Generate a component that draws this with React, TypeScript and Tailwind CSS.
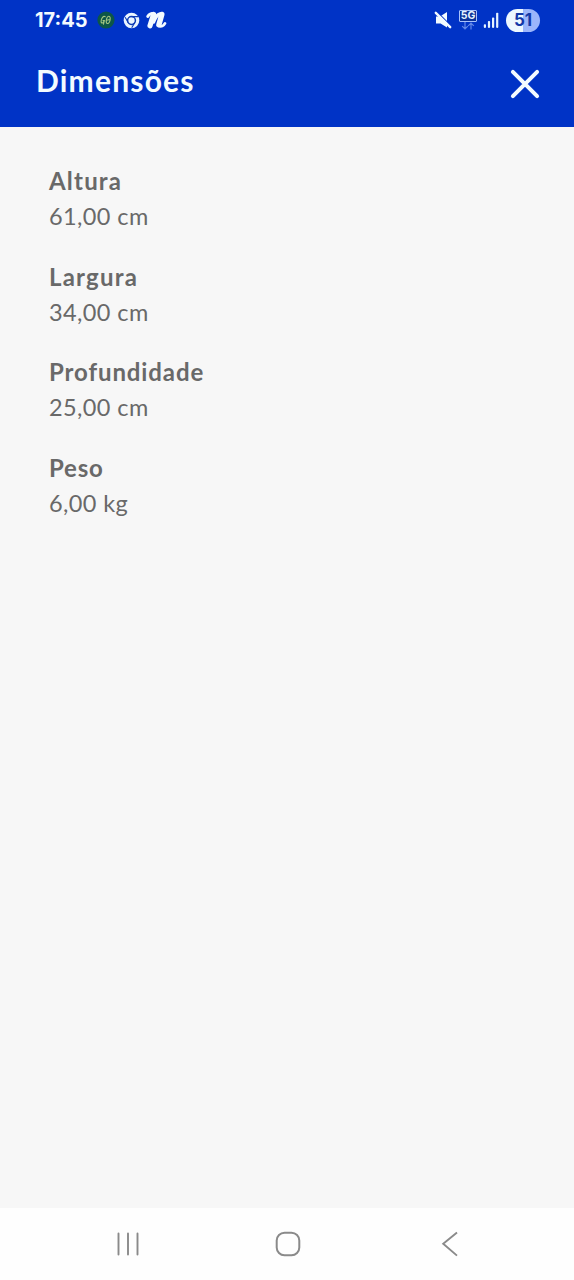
type Dimension = {
  label: string;
  value: string;
  labelClass: string;
};

const dimensions: Dimension[] = [
  { label: "Altura", value: "61,00 cm", labelClass: "tracking-[1.2px]" },
  { label: "Largura", value: "34,00 cm", labelClass: "tracking-[1.2px]" },
  { label: "Profundidade", value: "25,00 cm", labelClass: "tracking-[0.9px]" },
  { label: "Peso", value: "6,00 kg", labelClass: "tracking-[0.8px]" },
];

export default function App() {
  return (
    <div className="flex h-[1280px] w-[574px] flex-col overflow-hidden bg-[#f7f7f7] font-['Lato',sans-serif]">
      <header className="h-[127px] shrink-0 bg-[#0033c6] text-[#f3fbff]">
        <StatusBar />
        <div className="flex h-[87px] items-start justify-between pl-[36px] pr-[33px]">
          <h1 className="mt-[19px] text-[30px] font-bold leading-[42px] tracking-[1.2px]">Dimensões</h1>
          <button aria-label="Fechar" className="mt-[28px]">
            <svg width="32" height="32" viewBox="0 0 32 32" fill="none" stroke="currentColor" strokeWidth="4" strokeLinecap="round">
              <path d="M3.9 3.9 28.1 28.1M28.1 3.9 3.9 28.1" />
            </svg>
          </button>
        </div>
      </header>

      <main className="flex-1 pl-[49px] pt-[36px] text-[#696969]">
        <dl className="flex flex-col gap-[24.6px]">
          {dimensions.map((d) => (
            <div key={d.label}>
              <dt className={`text-[24px] font-bold leading-[36px] ${d.labelClass}`}>{d.label}</dt>
              <dd className="text-[23.5px] leading-[35px] tracking-[0.4px]">{d.value}</dd>
            </div>
          ))}
        </dl>
      </main>

      <NavBar />
    </div>
  );
}

function StatusBar() {
  return (
    <div className="flex h-10 items-center justify-between pl-[35px] pr-[34px]">
      <div className="flex items-center">
        <span className="w-[53px] whitespace-nowrap font-['Inter',sans-serif] text-[20px] font-bold leading-6">17:45</span>
        <GoIcon />
        <ChromeIcon />
        <ScriptIcon />
      </div>
      <div className="flex items-center">
        <MutedIcon />
        <NetworkIcon />
        <SignalIcon />
        <div className="ml-[7px] flex h-[23px] w-[34px] items-center justify-center rounded-full bg-linear-to-r from-[#edf8ff] from-51% to-[#9bb5fb] to-51% font-['Inter',sans-serif] text-[17px] font-bold leading-none text-[#1338a8]">
          51
        </div>
      </div>
    </div>
  );
}

function GoIcon() {
  return (
    <svg className="ml-[9px]" width="18" height="18" viewBox="0 0 18 18" fill="none">
      <circle cx="9" cy="9" r="8.6" fill="#0c5647" />
      <path
        d="M8.2 5.6C6.2 4.4 4 7.8 4.1 10.5c0 2.3 2.6 2 3.2-.9H6M7.3 9.6l-.8 3.6M11.8 5.2c-2 .1-3 4.4-2.4 6.4.6 1.8 2.8.9 3.5-1.8.6-2.5.3-4.7-1.1-4.6ZM9.5 9.2l3.6-.7"
        stroke="#a4c680"
        strokeWidth="1.1"
        strokeLinecap="round"
      />
    </svg>
  );
}

function ChromeIcon() {
  return (
    <svg className="ml-[8px]" width="17" height="17" viewBox="0 0 17 17" fill="none">
      <circle cx="8.5" cy="8.5" r="7.8" fill="#e9f5ff" />
      <circle cx="8.5" cy="8.5" r="3.9" stroke="#0c3bb5" strokeWidth="1.5" />
      <path d="M8.5 4.6h6.6M5.1 10.4 2.2 5.3M11.9 10.4l-3.2 5.4" stroke="#0c3bb5" strokeWidth="1.1" />
    </svg>
  );
}

function ScriptIcon() {
  return (
    <svg className="ml-[6px]" width="21" height="18" viewBox="0 0 21 18" fill="none" stroke="currentColor" strokeLinecap="round" strokeLinejoin="round">
      <path d="M1.8 5.4C3 2.8 6.2 1.8 7.2 3.4" strokeWidth="3" />
      <path d="M7.6 3.4 4 14.8" strokeWidth="5.2" />
      <path d="M7.6 11C9.2 6.6 11.4 3.6 14 3" strokeWidth="3.4" />
      <path d="M15.8 3.4 12.9 13.8" strokeWidth="5.4" />
      <path d="M13 14.8c2.2 1.2 4.6 0 6-2.4" strokeWidth="2.8" />
    </svg>
  );
}

function MutedIcon() {
  return (
    <svg width="18" height="18" viewBox="0 0 18 18" fill="none">
      <path d="M2 5.6h4l7-4.6v15.6L6.6 12.4H2Z" fill="#f3fbff" />
      <path d="M3 .8 17.4 15.2" stroke="#0033c6" strokeWidth="1.2" />
      <path d="M1.8 1.8 16.2 16.2" stroke="#f3fbff" strokeWidth="2.4" strokeLinecap="round" />
    </svg>
  );
}

function NetworkIcon() {
  return (
    <div className="ml-[7px] flex w-[18px] flex-col items-center">
      <div className="flex h-[12px] w-[18px] items-center justify-center rounded-[1px] border border-[#a9c2fa] bg-[#0a3098] font-['Inter',sans-serif] text-[10.5px] font-bold leading-none text-[#e6f4ff]">
        5G
      </div>
      <svg width="16" height="8" viewBox="0 0 16 8" fill="none" stroke="#6388e7" strokeWidth="1.2">
        <path d="M5 0v6.8M2.2 4.2 5 7l2.8-2.8M11 7.5V1M8.2 3.8 11 1l2.8 2.8" />
      </svg>
    </div>
  );
}

function SignalIcon() {
  return (
    <svg className="ml-[6px]" width="16" height="18" viewBox="0 0 16 18" fill="#e6f4ff">
      <rect x="0.8" y="13.3" width="2.2" height="3.6" rx="0.8" />
      <rect x="4.9" y="10" width="2.2" height="6.9" rx="0.8" />
      <rect x="9" y="6.5" width="2.2" height="10.4" rx="0.8" />
      <rect x="13.1" y="1.8" width="2.2" height="15.1" rx="0.8" />
    </svg>
  );
}

function NavBar() {
  return (
    <nav className="flex h-[72px] shrink-0 items-center justify-between bg-[#fefefe] pl-[115px] pr-[114px] text-[#8a8a8a]">
      <button aria-label="Recentes">
        <svg width="26" height="26" viewBox="0 0 26 26" stroke="currentColor" strokeWidth="1.9" strokeLinecap="round">
          <path d="M3.5 2.5v21M13 2.5v21M22.5 2.5v21" />
        </svg>
      </button>
      <button aria-label="Início" className="mr-[5px]">
        <svg width="26" height="26" viewBox="0 0 26 26" fill="none" stroke="currentColor" strokeWidth="2">
          <rect x="1.7" y="1.7" width="22.6" height="22.6" rx="7.8" />
        </svg>
      </button>
      <button aria-label="Voltar">
        <svg width="20" height="26" viewBox="0 0 20 26" fill="none" stroke="currentColor" strokeWidth="1.9">
          <path d="M17 1.4 3.2 12.8 17 24.6" />
        </svg>
      </button>
    </nav>
  );
}
